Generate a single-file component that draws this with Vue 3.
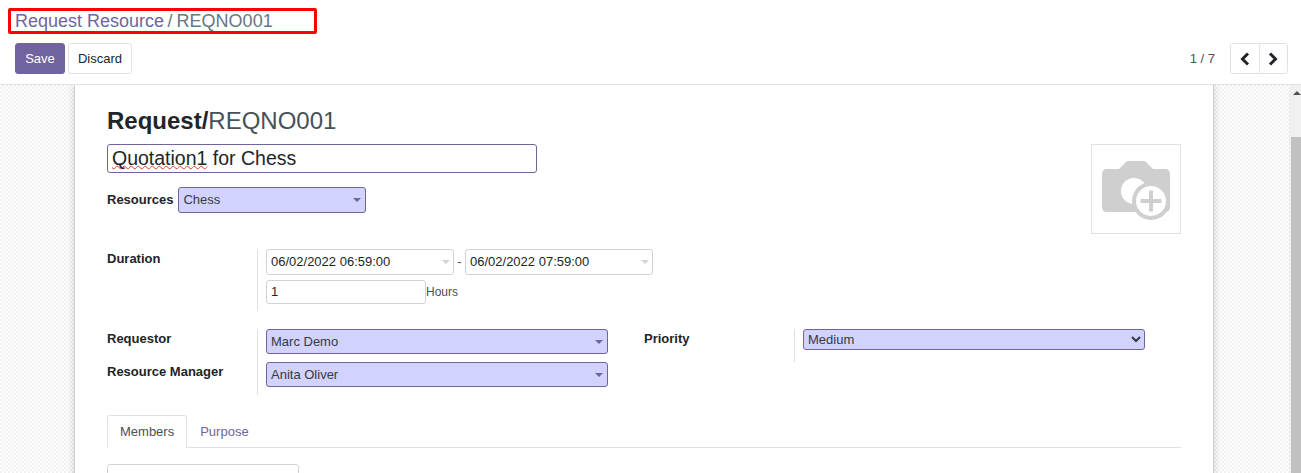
<script setup>
const dates = ['06/02/2022 06:59:00', '06/02/2022 07:59:00']
</script>

<template>
  <div class="app">
    <header class="cp">
      <div class="crumbs"><a class="crumb-link">Request Resource</a><span class="crumb-sep">/</span><span class="crumb-cur">REQNO001</span></div>
      <div class="cp-row">
        <div class="btns">
          <button class="btn primary">Save</button>
          <button class="btn plain">Discard</button>
        </div>
        <div class="pager">
          <span class="pager-val">1 / 7</span>
          <div class="pager-btns">
            <button class="pg">
              <svg width="10" height="14" viewBox="0 0 10 14"><path d="M8 1.500 2.500 7 8 12.500" fill="none" stroke="#212529" stroke-width="3"/></svg>
            </button>
            <button class="pg">
              <svg width="10" height="14" viewBox="0 0 10 14"><path d="M2 1.500 7.500 7 2 12.500" fill="none" stroke="#212529" stroke-width="3"/></svg>
            </button>
          </div>
        </div>
      </div>
    </header>

    <div class="body">
      <div class="canvas">
        <main class="sheet">
          <div class="top">
            <div class="top-left">
              <h1 class="title"><b>Request/</b><span>REQNO001</span></h1>
              <div class="name"><span class="wavy">Quotation1</span> for Chess</div>
              <div class="res-row">
                <label class="lab">Resources</label>
                <div class="m2o res">Chess<i class="caret"></i></div>
              </div>
            </div>
            <div class="photo">
              <svg width="70" height="61" viewBox="0 0 70 61">
                <path d="M6 9h12l7-7q1-1 3-1h14q2 0 3 1l7 7h12q5 0 5 5v33q0 5-5 5H6q-5 0-5-5V14q0-5 5-5z" fill="#cfcfcf"/>
                <circle cx="33" cy="31" r="13" fill="#fff"/>
                <circle cx="50" cy="41" r="19" fill="#cfcfcf"/>
                <circle cx="50" cy="41" r="15" fill="#fff"/>
                <path d="M39.500 41h21M50 30.500v21" stroke="#cfcfcf" stroke-width="4" fill="none"/>
              </svg>
            </div>
          </div>

          <div class="dur">
            <label class="lab col-lab">Duration</label>
            <div class="dur-val">
              <div class="dates">
                <div v-for="(d, i) in dates" :key="d" class="date-wrap">
                  <span v-if="i" class="dash">-</span>
                  <div class="date">{{ d }}<i class="caret light"></i></div>
                </div>
              </div>
              <div class="hours">
                <div class="num">1</div><span class="unit">Hours</span>
              </div>
            </div>
          </div>

          <div class="people">
            <div class="group g-left">
              <div class="labels">
                <label class="lab">Requestor</label>
                <label class="lab">Resource Manager</label>
              </div>
              <div class="vals">
                <div class="m2o wide">Marc Demo<i class="caret"></i></div>
                <div class="m2o wide">Anita Oliver<i class="caret"></i></div>
              </div>
            </div>
            <div class="group g-right">
              <div class="labels prio-lab"><label class="lab">Priority</label></div>
              <div class="vals prio-val">
                <select class="prio"><option>Medium</option></select>
              </div>
            </div>
          </div>

          <nav class="tabs">
            <a class="tab active">Members</a>
            <a class="tab">Purpose</a>
          </nav>
          <div class="members"></div>
        </main>
      </div>
      <div class="scrollbar">
        <div class="sb-track"><i class="sb-up"></i></div>
        <div class="sb-thumb"></div>
      </div>
    </div>
  </div>
</template>

<style scoped>
.app { height: 473px; width: 1301px; display: flex; flex-direction: column; overflow: hidden; font: 13px/1.5 "Liberation Sans", Arial, sans-serif; color: #212529; background: #fff; }
.cp { height: 85px; box-sizing: border-box; border-bottom: 1px solid #dee2e6; padding: 8px 13px 0 8px; flex: none; }
.crumbs { width: 309px; height: 26px; box-sizing: border-box; border: 3px solid #ff0000; border-radius: 2px; padding-left: 4px; display: flex; align-items: center; font-size: 18px; line-height: 18px; white-space: nowrap; }
.crumb-link { color: #71639e; }
.crumb-sep { color: #6c757d; margin: 0 4px 0 3.500px; }
.crumb-cur { color: #6c757d; }
.cp-row { display: flex; justify-content: space-between; margin-top: 9px; padding-left: 7px; }
.btns { display: flex; gap: 3px; }
.btn { height: 31px; box-sizing: border-box; border-radius: 3px; font: inherit; padding: 0; }
.primary { width: 50px; background: #71639e; border: 1px solid #71639e; color: #fff; }
.plain { width: 64px; background: #fff; border: 1px solid #dee2e6; color: #212529; }
.pager { display: flex; align-items: center; gap: 15px; }
.pager-val { color: #495057; }
.pager-btns { display: flex; width: 58px; height: 31px; box-sizing: border-box; border: 1px solid #dee2e6; border-radius: 3px; }
.pg { flex: 1; background: #fff; border: 0; padding: 0; display: flex; align-items: center; justify-content: center; border-radius: 3px; }
.pg + .pg { border-left: 1px solid #dee2e6; }

.body { flex: 1; display: flex; min-height: 0; }
.canvas { flex: 1; min-width: 0; overflow: hidden; padding-left: 74px; background-color: #fff; background-image: conic-gradient(#f0f0f0 25%, #fff 0 50%, #f0f0f0 0 75%, #fff 0); background-size: 4px 4px; }
.sheet { width: 1140px; min-height: 460px; box-sizing: border-box; background: #fff; border-left: 1px solid #c9ccd2; border-right: 1px solid #c9ccd2; box-shadow: 0 0 8px rgba(0,0,0,.16); padding: 20px 32px 0; }
.top { display: flex; justify-content: space-between; }
.title { margin: 0; font-size: 24px; line-height: 32px; font-weight: 400; color: #495057; }
.title b { font-weight: 700; color: #212529; }
.name { width: 430px; height: 29px; box-sizing: border-box; margin-top: 7px; border: 1px solid #71639e; border-radius: 3px; padding-left: 4px; font-size: 19.500px; line-height: 27px; color: #212529; }
.wavy { text-decoration: underline wavy #e03c3c 1px; text-underline-offset: 0; text-decoration-skip-ink: none; }
.res-row { display: flex; align-items: center; gap: 5px; margin-top: 14px; }
.lab { font-weight: 700; color: #212529; display: block; }
.m2o { position: relative; box-sizing: border-box; background: #d2d2ff; border: 1px solid #71639e; border-radius: 3px; padding-left: 4px; color: #343a40; }
.res { width: 188px; height: 26px; line-height: 24px; }
.caret { position: absolute; right: 4px; top: 50%; margin-top: -2px; border: 4px solid transparent; border-top-color: #71639e; border-bottom: 0; }
.caret.light { right: 3px; border-top-color: #ced4da; }
.photo { width: 90px; height: 90px; box-sizing: border-box; margin-top: 39px; border: 1px solid #dee2e6; padding: 15px 0 0 9px; }
.photo svg { display: block; }

.dur { display: flex; margin-top: 15px; }
.col-lab { width: 150px; flex: none; line-height: 20px; }
.dur-val { border-left: 1px solid #dee2e6; padding-left: 8px; height: 62px; }
.dates { display: flex; }
.date-wrap { display: flex; align-items: center; }
.dash { width: 11px; text-align: center; color: #495057; }
.date { position: relative; width: 188px; height: 26px; line-height: 24px; box-sizing: border-box; border: 1px solid #ced4da; border-radius: 3px; padding-left: 4px; color: #212529; }
.hours { display: flex; align-items: center; margin-top: 5px; }
.num { width: 160px; height: 24px; line-height: 22px; box-sizing: border-box; border: 1px solid #ced4da; border-radius: 3px; padding-left: 4px; color: #212529; }
.unit { font-size: 12px; color: #495057; }

.people { display: flex; margin-top: 18px; }
.group { display: flex; }
.g-left .labels { width: 150px; display: flex; flex-direction: column; gap: 13px; line-height: 20px; }
.g-left .vals { border-left: 1px solid #dee2e6; padding: 0 8px; height: 66px; display: flex; flex-direction: column; gap: 8px; }
.wide { width: 342px; height: 25px; line-height: 23px; }
.g-right { margin-left: 28px; }
.prio-lab { width: 150px; line-height: 20px; }
.prio-val { border-left: 1px solid #dee2e6; padding-left: 8px; height: 33px; }
.prio { display: block; width: 342px; height: 21px; box-sizing: border-box; background-color: #d2d2ff; border: 1px solid #71639e; border-radius: 3px; font: 13px "Liberation Sans", Arial, sans-serif; color: #343a40; padding: 0; }

.tabs { display: flex; margin-top: 20px; border-bottom: 1px solid #dee2e6; height: 33px; box-sizing: border-box; width: 1074px; }
.tab { box-sizing: border-box; height: 33px; padding: 0 13px; line-height: 33px; color: #71639e; }
.tab.active { color: #495057; background: #fff; border: 1px solid #dee2e6; border-bottom-color: #fff; border-radius: 3px 3px 0 0; padding: 0 12px; line-height: 31px; }
.members { width: 192px; height: 30px; box-sizing: border-box; margin-top: 16px; border: 1px solid #ced4da; border-radius: 3px; }

.scrollbar { width: 12px; flex: none; background: #f0f0f0; display: flex; flex-direction: column; align-items: flex-end; }
.sb-track { height: 52px; width: 100%; position: relative; }
.sb-up { position: absolute; left: 4px; top: 6px; border: 4px solid transparent; border-top: 0; border-bottom: 4px solid #505050; }
.sb-thumb { flex: 1; width: 10px; background: #c1c1c1; }
</style>
